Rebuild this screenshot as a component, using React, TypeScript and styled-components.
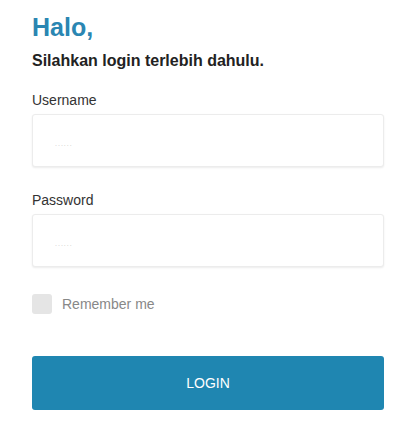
import React from 'react'
import styled, { createGlobalStyle } from 'styled-components'

const GlobalStyle = createGlobalStyle`
  body {
    margin: 0;
    background: #fff;
    font-family: "Liberation Sans", Arial, sans-serif;
  }
`

const Form = styled.form`
  padding: 12px 36px 0 32px;
  display: flex;
  flex-direction: column;
`

const Title = styled.h1`
  margin: 0;
  font-size: 25px;
  line-height: 30px;
  font-weight: 700;
  color: #2a86b2;
`

const Subtitle = styled.h2`
  margin: 9px 0 0;
  font-size: 16px;
  line-height: 20px;
  font-weight: 700;
  color: #222;
`

const Field = styled.div<{ $first?: boolean }>`
  display: flex;
  flex-direction: column;
  margin-top: ${p => (p.$first ? 21 : 25)}px;
`

const Label = styled.label`
  font-size: 14px;
  line-height: 16px;
  color: #333;
  margin-bottom: 6px;
`

const Input = styled.input`
  box-sizing: border-box;
  height: 53px;
  width: 100%;
  border: 1px solid #ececec;
  border-radius: 3px;
  box-shadow: 0 1px 2px rgba(0, 0, 0, 0.08);
  padding: 0 22px;
  font-size: 14px;
  font-family: inherit;
  outline: none;

  &::placeholder {
    color: #c8c8c8;
    font-size: 7px;
    letter-spacing: 1px;
  }
`

const Remember = styled.label`
  display: flex;
  align-items: center;
  gap: 10px;
  margin-top: 27px;
  font-size: 14px;
  color: #888;
`

const Check = styled.span`
  width: 20px;
  height: 20px;
  border-radius: 3px;
  background: #e5e5e5;
`

const Button = styled.button`
  margin-top: 42px;
  height: 54px;
  border: 0;
  border-radius: 3px;
  background: #1f86b1;
  color: #fff;
  font-size: 14px;
  font-family: inherit;
`

export default function App() {
  return (
    <>
      <GlobalStyle />
      <Form onSubmit={e => e.preventDefault()}>
        <Title>Halo,</Title>
        <Subtitle>Silahkan login terlebih dahulu.</Subtitle>
        <Field $first>
          <Label>Username</Label>
          <Input placeholder="......" />
        </Field>
        <Field>
          <Label>Password</Label>
          <Input type="password" placeholder="......" />
        </Field>
        <Remember>
          <Check />
          Remember me
        </Remember>
        <Button type="submit">LOGIN</Button>
      </Form>
    </>
  )
}
